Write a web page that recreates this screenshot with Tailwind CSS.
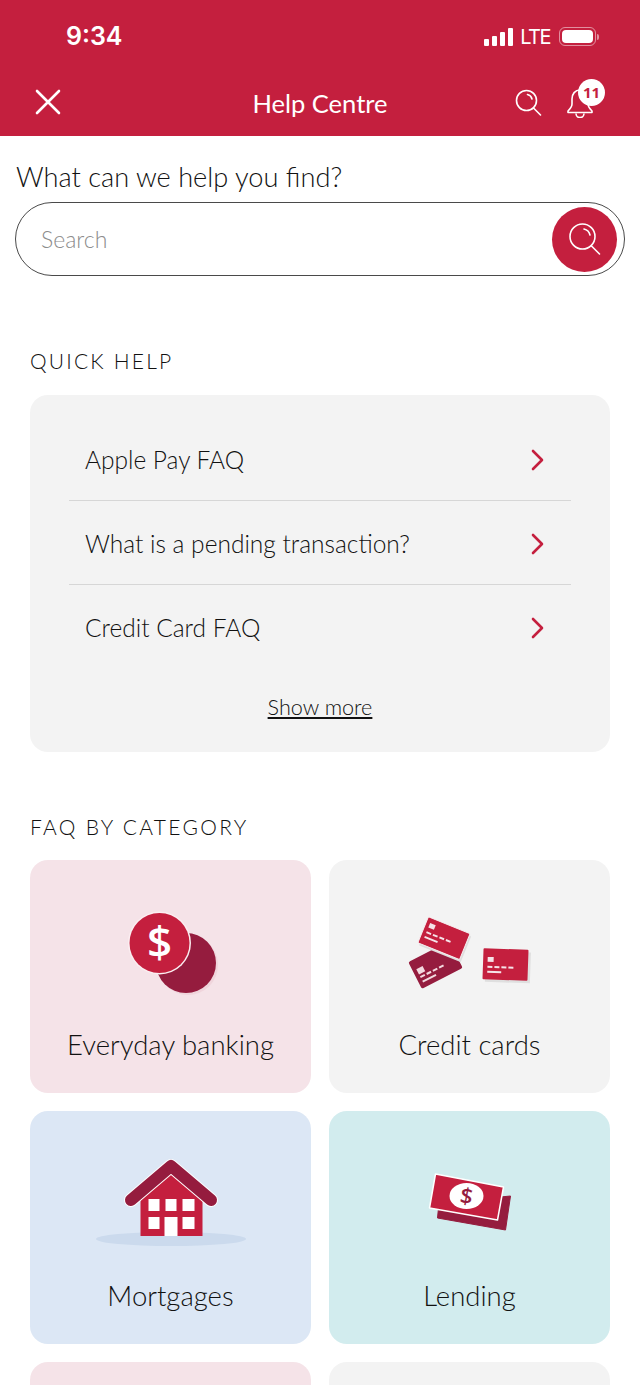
<!DOCTYPE html>
<html lang="en">
<head>
    <meta charset="UTF-8">
    <meta name="viewport" content="width=device-width, initial-scale=1.0">
    <title>Help Centre</title>
    <script src="https://cdn.jsdelivr.net/npm/@tailwindcss/browser@4"></script>
</head>
<body class="bg-white font-['Lato',sans-serif] font-light text-[#111]">
<div class="w-[640px] h-[1385px] overflow-hidden">

    <!-- Header -->
    <header class="h-[136px] bg-[#c41f3e] text-white">
        <!-- Status bar -->
        <div class="h-[72px] flex items-center justify-between pl-[66px] pr-[41px] pt-[1px]">
            <span class="font-['Inter',sans-serif] font-semibold text-[25px] leading-none">9:34</span>
            <div class="flex items-center gap-[7px]">
                <div class="flex items-end gap-[3px] h-[18px]">
                    <span class="w-[5px] h-[7px] bg-white rounded-[1px]"></span>
                    <span class="w-[5px] h-[10px] bg-white rounded-[1px]"></span>
                    <span class="w-[5px] h-[14px] bg-white rounded-[1px]"></span>
                    <span class="w-[5px] h-[18px] bg-white rounded-[1px]"></span>
                </div>
                <span class="font-['Inter',sans-serif] font-normal text-[20px] leading-none tracking-[-1.5px] mr-[2px]">LTE</span>
                <div class="flex items-center gap-[1px]">
                    <div class="w-[37px] h-[19px] border border-white/50 rounded-[6px] p-[2px]">
                        <div class="w-full h-full bg-white rounded-[4px]"></div>
                    </div>
                    <span class="w-[2px] h-[6px] bg-white/50 rounded-r-sm"></span>
                </div>
            </div>
        </div>
        <!-- Nav -->
        <nav class="relative h-[64px] flex items-center justify-between pl-[35px] pr-[46px] pb-[4px]">
            <svg width="26" height="26" viewBox="0 0 26 26" fill="none" stroke="white" stroke-width="2.6" stroke-linecap="round"><path d="M2 2l22 22M24 2L2 24"/></svg>
            <span class="absolute left-0 right-0 top-[13px] text-center text-[25.500px] leading-[36px] font-normal">Help Centre</span>
            <div class="flex items-center gap-[24px]">
                <svg width="27" height="27" viewBox="0 0 27 27" fill="none" stroke="white" stroke-width="1.6" stroke-linecap="round"><circle cx="11.5" cy="11.5" r="10"/><path d="M18.5 19l7 7"/><path d="M12.5 5.5a6 6 0 0 1 4.5 4.5"/></svg>
                <div class="relative w-[28px] h-[32px]">
                    <svg class="absolute left-0 top-[2px]" width="28" height="30" viewBox="0 0 28 30" fill="none" stroke="white" stroke-width="1.6" stroke-linejoin="round"><path d="M14 2c-5 0-8 4-8 9v5c0 3-2 5-4 7v1.500h24V23c-2-2-4-4-4-7v-5c0-5-3-9-8-9z"/><path d="M10 25.500a4 4 0 0 0 8 0"/></svg>
                    <span class="absolute left-[12px] top-[-7px] w-[27px] h-[27px] rounded-full bg-white text-[#c41f3e] text-[15px] font-bold leading-[27px] text-center font-['Open_Sans',sans-serif]">11</span>
                </div>
            </div>
        </nav>
    </header>

    <main>
        <!-- Search -->
        <section class="px-[15px] pt-[23px]">
            <h1 class="pl-[1px] text-[27.200px] leading-[36px]">What can we help you find?</h1>
            <div class="mt-[7px] h-[74px] border-[1.500px] border-[#4a4a4a] rounded-full flex items-center justify-between pl-[25px] pr-[7px]">
                <span class="text-[23px] text-[#8c8c8c]">Search</span>
                <div class="w-[65px] h-[65px] rounded-full bg-[#c41f3e] flex items-center justify-center">
                    <svg width="34" height="34" viewBox="0 0 34 34" fill="none" stroke="white" stroke-width="1.6" stroke-linecap="round"><circle cx="14.500" cy="14.500" r="12.500"/><path d="M23.500 24l8 8"/><path d="M16 7a8 8 0 0 1 6 6"/></svg>
                </div>
            </div>
        </section>

        <!-- Quick help -->
        <section class="px-[30px] pt-[71px]">
            <h2 class="text-[21px] leading-[28px] tracking-[2.200px]">QUICK HELP</h2>
            <div class="mt-[20px] h-[357px] bg-[#f3f3f3] rounded-[18px] px-[39px] pt-[22px]">
                <a class="h-[84px] pt-[2px] flex items-center justify-between pl-[16px] pr-[27px] border-b border-[#d6d6d6] text-[24.500px]">
                    <span class="translate-y-px">Apple Pay FAQ</span>
                    <svg width="13" height="22" viewBox="0 0 13 22" fill="none" stroke="#c41f3e" stroke-width="2.6" stroke-linecap="round" stroke-linejoin="round"><path d="M2 2l9 9-9 9"/></svg>
                </a>
                <a class="h-[84px] pt-[2px] flex items-center justify-between pl-[16px] pr-[27px] border-b border-[#d6d6d6] text-[24.500px]">
                    <span class="translate-y-px">What is a pending transaction?</span>
                    <svg width="13" height="22" viewBox="0 0 13 22" fill="none" stroke="#c41f3e" stroke-width="2.6" stroke-linecap="round" stroke-linejoin="round"><path d="M2 2l9 9-9 9"/></svg>
                </a>
                <a class="h-[84px] pt-[2px] flex items-center justify-between pl-[16px] pr-[27px] text-[24.500px]">
                    <span>Credit Card FAQ</span>
                    <svg width="13" height="22" viewBox="0 0 13 22" fill="none" stroke="#c41f3e" stroke-width="2.6" stroke-linecap="round" stroke-linejoin="round"><path d="M2 2l9 9-9 9"/></svg>
                </a>
                <p class="mt-[23px] text-center text-[21.600px] leading-[30px] underline">Show more</p>
            </div>
        </section>

        <!-- FAQ by category -->
        <section class="px-[30px] pt-[60px]">
            <h2 class="text-[21px] leading-[30px] tracking-[2.300px]">FAQ BY CATEGORY</h2>
            <div class="mt-[18px] grid grid-cols-2 gap-x-[18px] gap-y-[18px]">

                <div class="h-[233px] rounded-[18px] bg-[#f5e3e8] flex flex-col items-center">
                    <svg class="mt-[48px]" width="100" height="90" viewBox="0 0 100 90">
                        <circle cx="67" cy="57" r="30" fill="#f0d5dc"/>
                        <circle cx="65" cy="55" r="30" fill="#951c3e"/>
                        <circle cx="38.500" cy="35" r="31.500" fill="#fbeef1"/>
                        <circle cx="38.500" cy="35" r="30" fill="#c41f3e"/>
                        <text x="38.500" y="50" text-anchor="middle" fill="white" font-size="44" font-weight="600" font-family="Open Sans">$</text>
                    </svg>
                    <span class="mt-[29px] text-[27.500px] leading-[36px]">Everyday banking</span>
                </div>

                <div class="h-[233px] rounded-[18px] bg-[#f3f3f3] flex flex-col items-center">
                    <svg class="mt-[48px]" width="130" height="90" viewBox="0 0 130 90">
                        <g transform="translate(30.500 57) rotate(-27)"><rect x="-23" y="-15" width="46" height="30" rx="2" fill="#951c3e"/><rect x="-19" y="-5" width="7" height="6" fill="#f3d9df"/><path d="M-19 4h5M-12 4h5M-5 4h5M2 4h5M-19 9h15" stroke="#f3d9df" stroke-width="2"/></g>
                        <g transform="translate(38.500 30) rotate(22)"><rect x="-22" y="-14" width="45" height="28" rx="1" fill="#dedede" transform="translate(2 2)"/><rect x="-22" y="-14" width="45" height="28" rx="1" fill="#c41f3e" stroke="#f7eef0"/><rect x="-18" y="-9" width="6" height="5" fill="#f5e3e8"/><path d="M-18 1h5M-11 1h5M-4 1h5M3 1h5M-18 6h14" stroke="#f5e3e8" stroke-width="2"/></g>
                        <g transform="translate(100.500 56.500) rotate(2)">
                            <rect x="-20" y="-13" width="45" height="31" fill="#dfdfdf"/>
                            <rect x="-22.500" y="-15.500" width="45" height="31" rx="1" fill="#c41f3e"/>
                            <rect x="-18" y="-7" width="6" height="5" fill="#f5e3e8"/>
                            <path d="M-18 3h5M-11 3h5M-4 3h5M3 3h5M-18 8h14" stroke="#f5e3e8" stroke-width="2"/>
                        </g>
                    </svg>
                    <span class="mt-[29px] text-[27.500px] leading-[36px]">Credit cards</span>
                </div>

                <div class="h-[233px] rounded-[18px] bg-[#dce7f5] flex flex-col items-center">
                    <svg class="mt-[47px]" width="150" height="90" viewBox="0 0 150 90">
                        <ellipse cx="75" cy="81" rx="75" ry="7" fill="#cbdaed"/>
                        <path d="M44.500 42L75 15l31.500 27v36h-62z" fill="#c41f3e"/>
                        <path d="M35 42L75 8l40 34" fill="none" stroke="#fff" stroke-width="14" stroke-linecap="round" stroke-linejoin="round"/>
                        <path d="M35 42L75 8l40 34" fill="none" stroke="#951c3e" stroke-width="12" stroke-linecap="round" stroke-linejoin="round"/>
                        <path d="M52.500 41h11v12h-11zM69.500 41h11v12h-11zM86.500 41h12v12h-12zM52.500 59h11v12h-11zM86.500 59h12v12h-12zM68.500 59h13v19h-13z" fill="#fff"/>
                    </svg>
                    <span class="mt-[30px] text-[27.500px] leading-[36px]">Mortgages</span>
                </div>

                <div class="h-[233px] rounded-[18px] bg-[#d2ecee] flex flex-col items-center">
                    <svg class="mt-[47px]" width="84" height="90" viewBox="0 0 84 90">
                        <path d="M11 45L82.500 38 77.500 72 9.500 60z" fill="#951c3e" stroke="#951c3e" stroke-linejoin="round"/>
                        <path d="M7.500 16L75.500 29 69.500 62 1.500 50z" fill="#c41f3e" stroke="#fff" stroke-width="1.500" stroke-linejoin="round"/>
                        <ellipse cx="38.500" cy="38" rx="17" ry="13" fill="#fff"/>
                        <text x="38.500" y="46" text-anchor="middle" fill="#951c3e" font-size="22" font-weight="600" font-family="Open Sans" transform="rotate(10 38.500 38)">$</text>
                    </svg>
                    <span class="mt-[30px] text-[27.500px] leading-[36px]">Lending</span>
                </div>

                <div class="h-[233px] rounded-[18px] bg-[#f5e3e8]"></div>
                <div class="h-[233px] rounded-[18px] bg-[#f3f3f3]"></div>
            </div>
        </section>
    </main>
</div>
</body>
</html>
